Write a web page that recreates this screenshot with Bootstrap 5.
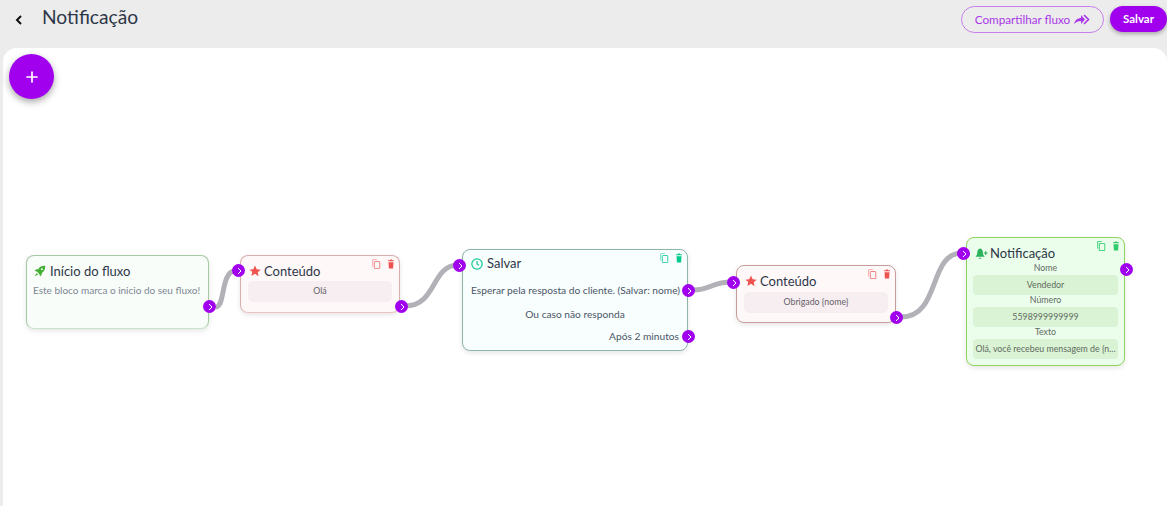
<!DOCTYPE html>
<html lang="pt"><head><meta charset="utf-8"><title>Notificação</title>
<link href="https://cdn.jsdelivr.net/npm/bootstrap@5.3.0/dist/css/bootstrap.min.css" rel="stylesheet">
<style>
html,body{height:506px;overflow:hidden}
body{background:#ececec;font-family:Lato,"Noto Sans",sans-serif;color:#333}
.topbar{height:48px;padding:0 0 15px 14px}
.back-ico{width:10px;height:12px;margin-right:18px;position:relative;top:3px}
.page-title{font-size:19.2px;line-height:34px;color:#2d3748;font-weight:400;margin:0}
.share-btn{height:27px;width:143px;border:1px solid #c77dec;border-radius:14px;color:#a936e8;font-size:11.7px;background:transparent;padding:0;margin-right:6px;margin-top:6px}
.save-btn{height:26px;width:57px;border:0;border-radius:13px;background:#a000ee;color:#fff;font-size:11.5px;font-weight:700;padding:0;margin-top:6px;box-shadow:0 2px 4px rgba(0,0,0,.3)}
.board{position:relative;height:458px;margin-left:3px;background:#fff;border-radius:14px 14px 0 0}
.fab{position:absolute;left:6px;top:6px;width:45px;height:45px;border-radius:50%;background:#a000ee;border:0;padding:0;box-shadow:0 3px 7px rgba(0,0,0,.35)}
.edges{position:absolute;left:0;top:0}
.fnode{position:absolute;border:1px solid;border-radius:8px;box-shadow:0 2px 5px rgba(0,0,0,.1);color:#4a5568}
.n-start{left:23px;top:207px;width:183px;height:74px;background:#f8fdf9;border-color:#a5c9a5;border-bottom-color:#cbe3cb;padding:6px 6px}
.n-c1{left:237px;top:207px;width:160px;height:58px;background:#fff8f8;border-color:#d9aeae;border-bottom-color:#edc4c4}
.n-c2{left:733px;top:217px;width:160px;height:58px;background:#fff8f8;border-color:#c99c9c}
.n-wait{left:459px;top:201px;width:226px;height:102px;background:#f8fefd;border-color:#8db5aa}
.n-note{left:963px;top:189px;width:159px;height:129px;background:#ebfdeb;border-color:#8fd45c;padding-top:6px}
.node-head{font-size:13px;line-height:18px;color:#2d3748;white-space:nowrap;gap:3px}
.n-start .node-head{gap:4px;padding-left:1px}
.n-wait .node-head{gap:4px}
.n-note .node-head{gap:2px}
.node-desc{font-size:10px;line-height:14px;color:#7d8794;white-space:nowrap;margin-top:3px}
.node-ico{width:12px;height:12px;flex:none}
.n-note .node-ico{width:13px;height:13px}
.c-head{padding:6px 0 0 8px}
.msg-box{margin:1px 7px 0;height:21px;line-height:19px;border-radius:5px;background:#f6eef0;font-size:8.8px;text-align:center;color:#66606a}
.n-c2 .msg-box{margin-top:2px}
.tools{position:absolute;top:3px;right:3px;gap:5px}
.tool-ico{width:10px;height:10px;display:block}
.wait-line{font-size:10.2px;line-height:14px;color:#4a5568;white-space:nowrap}
.clock-ico{position:relative;top:1px}
.field-label{font-size:8.8px;line-height:10px;text-align:center;color:#5f6b62}
.n-note .node-head{margin-bottom:1px}
.field-box{margin:2px 6px 0;height:20px;line-height:20px;background:#daf3d4;border-radius:4px;font-size:8.8px;text-align:center;color:#5f6b62;white-space:nowrap;overflow:hidden}
.hdl{position:absolute;width:13px;height:13px;border-radius:50%;background:#a000ee;display:block}
.hdl svg{position:absolute;left:2.500px;top:2.500px;width:8px;height:8px}
</style></head><body>
<header class="topbar d-flex align-items-start">
  <div class="d-flex align-items-center flex-grow-1">
    <svg class="back-ico" viewBox="0 0 10 12"><path d="M7 2 3 6l4 4" fill="none" stroke="#111" stroke-width="2"/></svg>
    <h1 class="page-title">Notificação</h1>
  </div>
  <button class="share-btn btn d-flex align-items-center justify-content-center gap-1" type="button">Compartilhar fluxo
    <svg width="16" height="11" viewBox="0 0 16 11"><path d="M0 10C1 6 4 4 7 4V1l4 4.5L7 10V7C4 7 2 8 0 10Z" fill="#a936e8"/><path d="M10 1l4.500 4.500L10 10" fill="none" stroke="#a936e8" stroke-width="1.600"/></svg>
  </button>
  <button class="save-btn btn" type="button">Salvar</button>
</header>
<main class="board">
  <button class="fab btn" type="button" aria-label="Adicionar"><svg width="14" height="14" viewBox="0 0 14 14" class="d-block mx-auto"><path d="M7 2v10M2 7h10" stroke="#fff" stroke-width="1.700" stroke-linecap="round"/></svg></button>
  <svg class="edges" width="1164" height="458" fill="none" stroke="#b1b1b7" stroke-width="5">
    <path d="M213 259C222 259 218 223 232 223"/>
    <path d="M402 258C434 258 428 217 455 217"/>
    <path d="M690 242C708 242 708 234 729 234"/>
    <path d="M898 269C938 269 925 205 959 205"/>
  </svg>

  <section class="fnode n-start">
    <div class="node-head d-flex align-items-center">
      <svg class="node-ico" viewBox="0 0 16 16"><path d="M15 1c-4-.300-7 1-9.500 4.500L3 5.800.8 8l3 .7 3.500 3.500.7 3 2.200-2.200.3-2.500C14 8 15.300 5 15 1Z" fill="#45b035"/><path d="M3.500 10.500 1 15l4.500-2.500Z" fill="#45b035"/><circle cx="10.500" cy="5.500" r="1.300" fill="#f8fdf9"/></svg>
      <span>Início do fluxo</span>
    </div>
    <div class="node-desc">Este bloco marca o inicio do seu fluxo!</div>
  </section>

  <section class="fnode n-c1">
    <div class="tools d-flex">
      <svg class="tool-ico" viewBox="0 0 12 12" fill="none" stroke="#ef6b6b"><rect x="4" y="3" width="6.500" height="8.500" rx=".8"/><path d="M2 9V1.500a1 1 0 0 1 1-1h4" opacity=".7"/></svg>
      <svg class="tool-ico" viewBox="0 0 12 12"><path d="M2.500 1.500h2L5 .5h2l.5 1h2v1.300h-7ZM3 4h6l-.5 7.500h-5Z" fill="#ef5350"/></svg>
    </div>
    <div class="c-head node-head d-flex align-items-center">
      <svg class="node-ico" viewBox="0 0 14 14"><path d="M7 .5l2 4.400 4.700.5-3.500 3.100 1 4.700L7 10.300l-4.200 2.400 1-4.700L.3 5.400 5 4.900Z" fill="#ef5350"/></svg>
      <span>Conteúdo</span>
    </div>
    <div class="msg-box">Olá</div>
  </section>

  <section class="fnode n-wait">
    <div class="tools d-flex">
      <svg class="tool-ico" viewBox="0 0 12 12" fill="none" stroke="#12c999"><rect x="4" y="3" width="6.500" height="8.500" rx=".8"/><path d="M2 9V1.500a1 1 0 0 1 1-1h4" opacity=".7"/></svg>
      <svg class="tool-ico" viewBox="0 0 12 12"><path d="M2.500 1.500h2L5 .5h2l.5 1h2v1.300h-7ZM3 4h6l-.5 7.500h-5Z" fill="#00c98d"/></svg>
    </div>
    <div class="node-head d-flex align-items-center ps-2 pt-1">
      <svg class="node-ico clock-ico" viewBox="0 0 14 14" fill="none" stroke="#12c999" stroke-width="1.400"><circle cx="7" cy="7" r="6"/><path d="M7 3.500V7l2.400 1.600"/></svg>
      <span>Salvar</span>
    </div>
    <div class="wait-line ps-2" style="margin-top:11px">Esperar pela resposta do cliente. (Salvar: nome)</div>
    <div class="wait-line text-center" style="margin-top:10px">Ou caso não responda</div>
    <div class="wait-line text-end" style="margin-top:8px;padding-right:8px">Após 2 minutos</div>
  </section>

  <section class="fnode n-c2">
    <div class="tools d-flex">
      <svg class="tool-ico" viewBox="0 0 12 12" fill="none" stroke="#ef6b6b"><rect x="4" y="3" width="6.500" height="8.500" rx=".8"/><path d="M2 9V1.500a1 1 0 0 1 1-1h4" opacity=".7"/></svg>
      <svg class="tool-ico" viewBox="0 0 12 12"><path d="M2.500 1.500h2L5 .5h2l.5 1h2v1.300h-7ZM3 4h6l-.5 7.500h-5Z" fill="#ef5350"/></svg>
    </div>
    <div class="c-head node-head d-flex align-items-center">
      <svg class="node-ico" viewBox="0 0 14 14"><path d="M7 .5l2 4.400 4.700.5-3.500 3.100 1 4.700L7 10.300l-4.200 2.400 1-4.700L.3 5.400 5 4.900Z" fill="#ef5350"/></svg>
      <span>Conteúdo</span>
    </div>
    <div class="msg-box">Obrigado {nome}</div>
  </section>

  <section class="fnode n-note">
    <div class="tools d-flex">
      <svg class="tool-ico" viewBox="0 0 12 12" fill="none" stroke="#4cd984" stroke-width="1.300"><rect x="4" y="3" width="6.500" height="8.500" rx=".8"/><path d="M2 9V1.500a1 1 0 0 1 1-1h4"/></svg>
      <svg class="tool-ico" viewBox="0 0 12 12"><path d="M2.500 1.500h2L5 .5h2l.5 1h2v1.300h-7ZM3 4h6l-.5 7.500h-5Z" fill="#2fcb6c"/></svg>
    </div>
    <div class="node-head d-flex align-items-center ps-2">
      <svg class="node-ico" viewBox="0 0 14 14"><path d="M5.500 1.500C3.200 2 2.500 4 2.500 6c0 2-1 3.500-2 4.500h10c-1-1-2-2.500-2-4.500 0-2-.700-4-3-4.500ZM4 11.500h3C7 13 4 13 4 11.500Z" fill="#2db35d"/><path d="M11.500 4.500v4M9.500 6.500h4" stroke="#2db35d" stroke-width="1.200"/></svg>
      <span>Notificação</span>
    </div>
    <div class="field-label">Nome</div>
    <div class="field-box">Vendedor</div>
    <div class="field-label">Número</div>
    <div class="field-box">5598999999999</div>
    <div class="field-label">Texto</div>
    <div class="field-box">Olá, você recebeu mensagem de {n...</div>
  </section>

  <span class="hdl" style="left:200px;top:252px"><svg viewBox="0 0 8 8"><path d="M3 1l3 3-3 3" fill="none" stroke="#fff"/></svg></span>
  <span class="hdl" style="left:229px;top:216px"><svg viewBox="0 0 8 8"><path d="M3 1l3 3-3 3" fill="none" stroke="#fff"/></svg></span>
  <span class="hdl" style="left:392px;top:252px"><svg viewBox="0 0 8 8"><path d="M3 1l3 3-3 3" fill="none" stroke="#fff"/></svg></span>
  <span class="hdl" style="left:450px;top:211px"><svg viewBox="0 0 8 8"><path d="M3 1l3 3-3 3" fill="none" stroke="#fff"/></svg></span>
  <span class="hdl" style="left:679px;top:236px"><svg viewBox="0 0 8 8"><path d="M3 1l3 3-3 3" fill="none" stroke="#fff"/></svg></span>
  <span class="hdl" style="left:679px;top:282px"><svg viewBox="0 0 8 8"><path d="M3 1l3 3-3 3" fill="none" stroke="#fff"/></svg></span>
  <span class="hdl" style="left:724px;top:228px"><svg viewBox="0 0 8 8"><path d="M3 1l3 3-3 3" fill="none" stroke="#fff"/></svg></span>
  <span class="hdl" style="left:887px;top:263px"><svg viewBox="0 0 8 8"><path d="M3 1l3 3-3 3" fill="none" stroke="#fff"/></svg></span>
  <span class="hdl" style="left:954px;top:199px"><svg viewBox="0 0 8 8"><path d="M3 1l3 3-3 3" fill="none" stroke="#fff"/></svg></span>
  <span class="hdl" style="left:1117px;top:215px"><svg viewBox="0 0 8 8"><path d="M3 1l3 3-3 3" fill="none" stroke="#fff"/></svg></span>
</main>
<script src="https://cdn.jsdelivr.net/npm/bootstrap@5.3.0/dist/js/bootstrap.bundle.min.js"></script>
</body></html>
